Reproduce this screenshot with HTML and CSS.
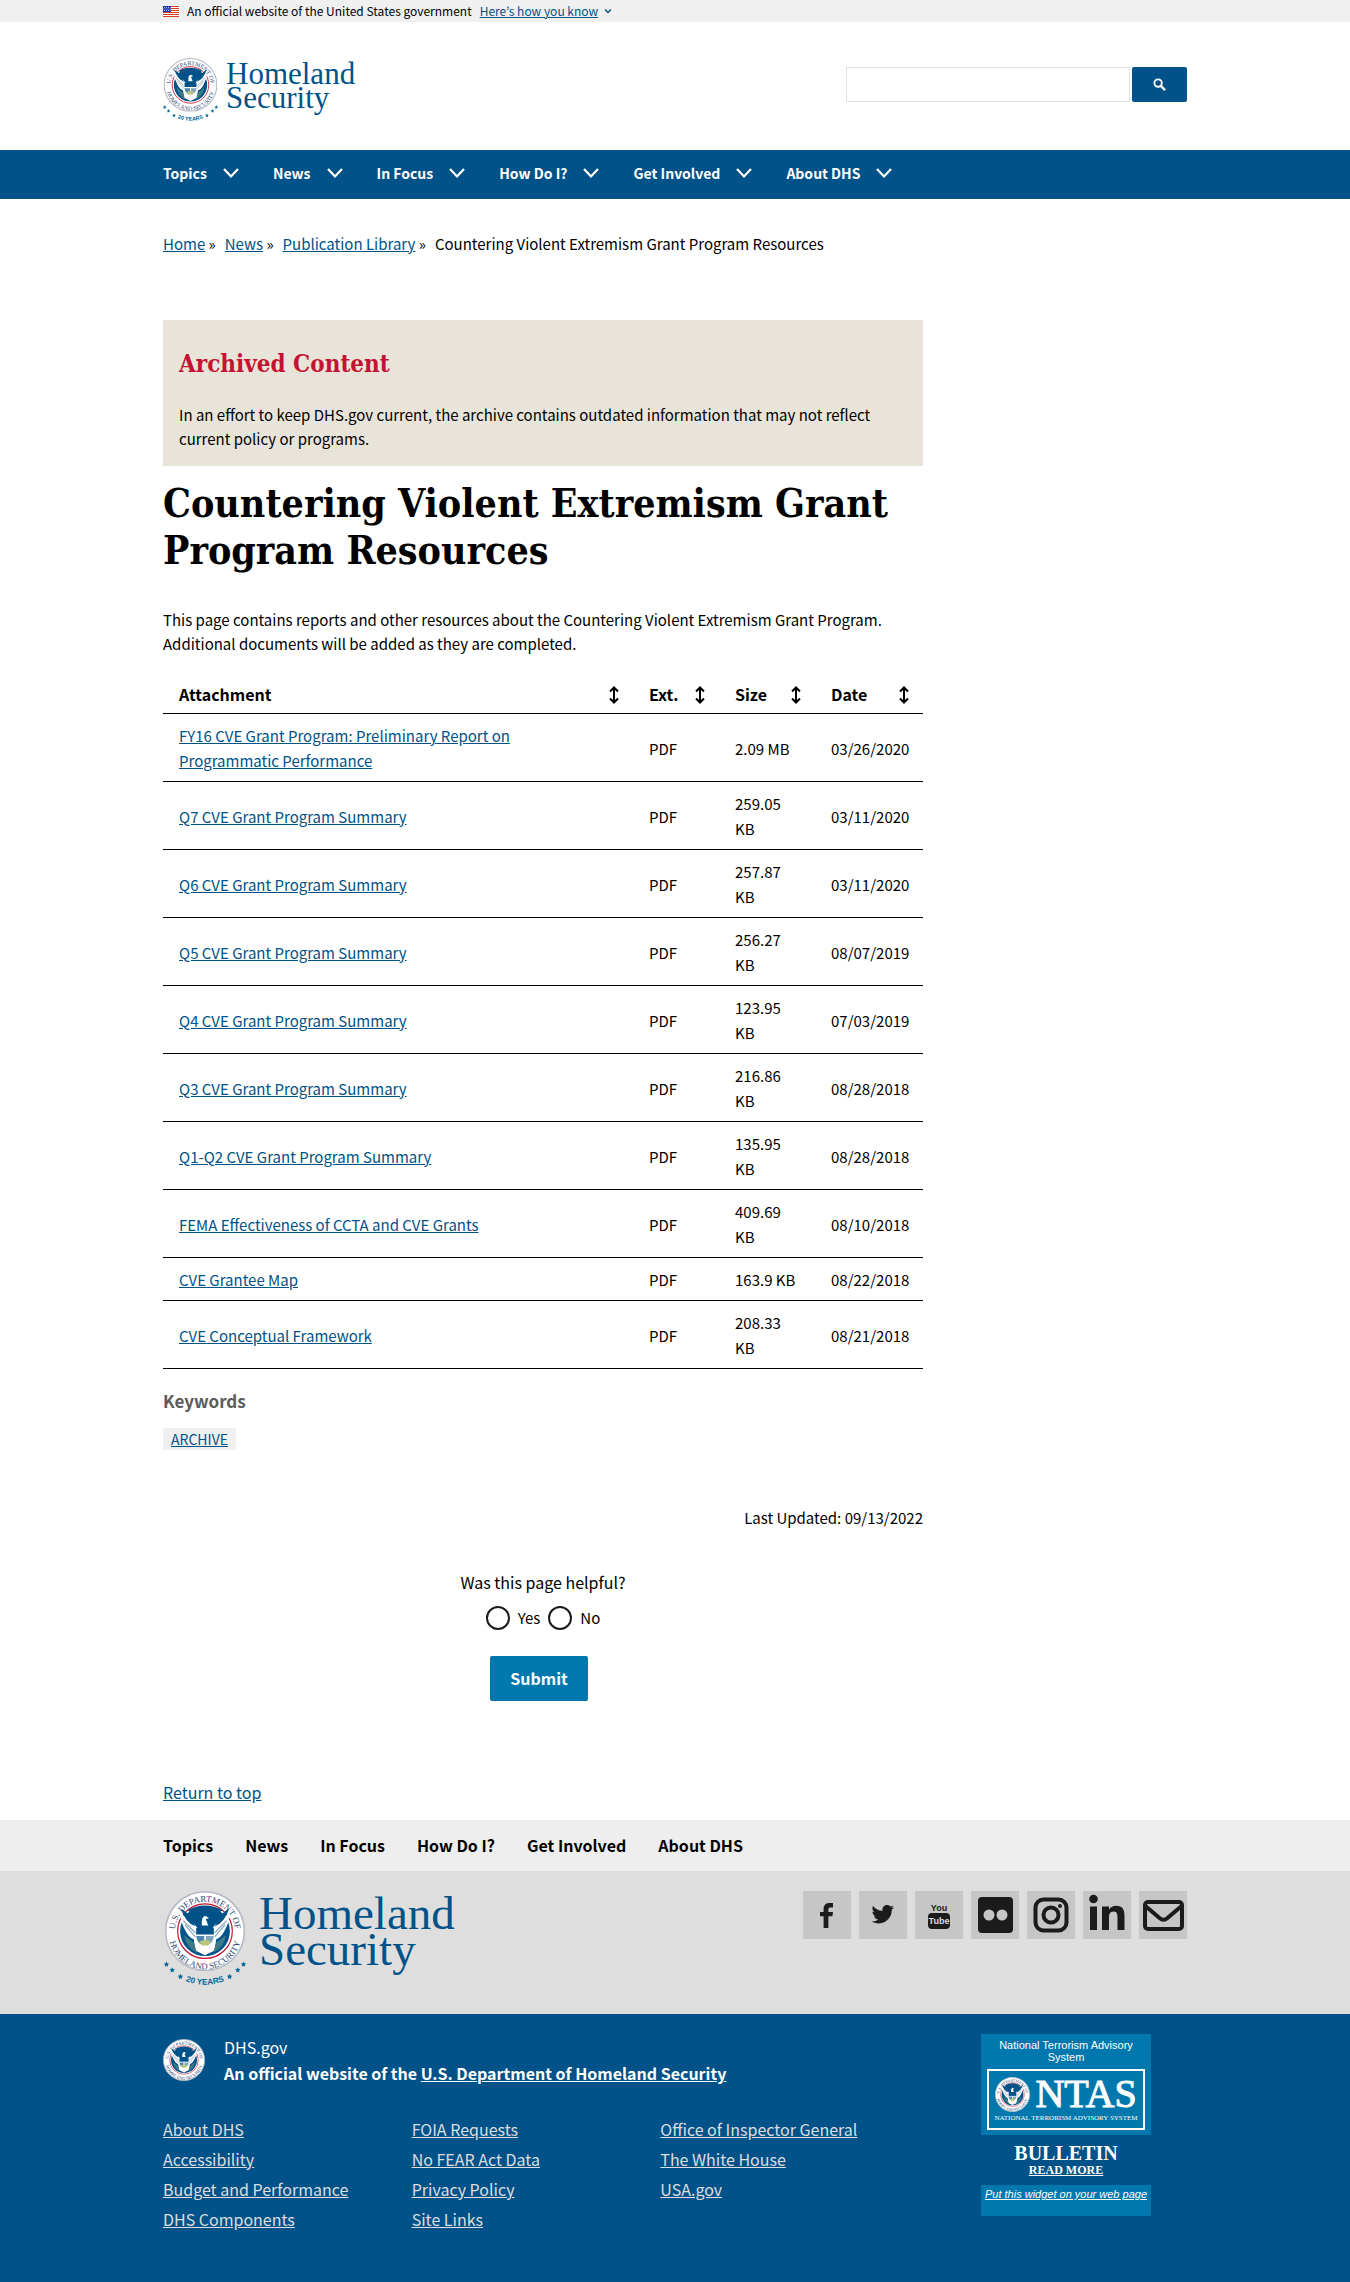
FILE: index.html
```html
<!DOCTYPE html>
<html lang="en">
<head>
<meta charset="utf-8">
<meta name="viewport" content="width=device-width, initial-scale=1">
<title>Countering Violent Extremism Grant Program Resources | Homeland Security</title>
<link rel="stylesheet" href="styles.css">
</head>
<body id="top">

<svg class="sprite" aria-hidden="true">
  <symbol id="seal" viewBox="0 0 100 100">
    <circle cx="50" cy="50" r="49" fill="#fff" stroke="#b5b9c4" stroke-width="2"/>
    <path id="arc-top" d="M14.500 63 A37.500 37.500 0 1 1 85.500 63" fill="none"/>
    <path id="arc-bottom" d="M4.500 52 A45.500 45.500 0 0 0 95.500 52" fill="none"/>
    <g class="seal-text">
      <text><textPath href="#arc-top" startOffset="50%" text-anchor="middle">U.S. DEPARTMENT OF</textPath></text>
      <text><textPath href="#arc-bottom" startOffset="50%" text-anchor="middle">HOMELAND SECURITY</textPath></text>
    </g>
    <circle cx="50" cy="50" r="34" fill="#fff" stroke="#c41230" stroke-width="1.500"/>
    <circle cx="50" cy="50" r="31" fill="#005288"/>
    <path d="M19 28 Q30 34 36 40 L42 48 L58 48 L64 40 Q70 34 81 28 Q80 40 74 50 Q70 58 64 60 L62 74 L50 80 L38 74 L36 60 Q30 58 26 50 Q20 40 19 28Z" fill="#fff"/>
    <path d="M23 37 L38 52 M25 42 L38 57 M77 37 L62 52 M75 42 L62 57" stroke="#8fa9c4" stroke-width="1.500" fill="none"/>
    <path d="M28 24 L33 27 L39 41 L44 43 L46 36 Q46 30 52 30 L56 34 L52 35 L55 43 L61 41 L67 27 L72 24 Q62 18 50 18 Q38 18 28 24Z" fill="#005288"/>
    <path d="M46 43 Q45 31 51 31 L55 34 L51 35 L54 43Z" fill="#fff"/>
    <path d="M39 46 H61 V54 H39Z" fill="#005288"/>
    <path d="M39 56 L49 56 L49 68 Q40 66 39 56Z" fill="#4f86ad"/>
    <path d="M51 56 H61 Q60 66 51 68Z" fill="#7fa5bf"/>
    <path d="M43 63 Q50 59 57 63 L54 68 H46Z" fill="#b9c77b"/>
    <path d="M20 22 Q28 26 33 34 L38 44 Q26 40 20 22Z M80 22 Q72 26 67 34 L62 44 Q74 40 80 22Z" fill="#005288"/>
    <path d="M24 55 Q26 70 40 77 L36 64Z M76 55 Q74 70 60 77 L64 64Z" fill="#3c7a86"/>
  </symbol>
  <symbol id="seal-years" viewBox="0 0 100 122">
    <use href="#seal" x="1" y="0" width="98" height="98"/>
    <path id="arc-years" d="M0 89 A62 62 0 0 0 100 89" fill="none"/>
    <text class="years-text"><textPath href="#arc-years" startOffset="50%" text-anchor="middle">20 YEARS</textPath></text>
    <g fill="#00689d">
      <path id="star" d="M3 86 l1 2.200 2.300 .3 -1.700 1.600 .4 2.300 -2 -1.100 -2 1.100 .4 -2.300 -1.700 -1.600 2.300 -.3z"/>
      <use href="#star" x="7" y="7"/>
      <use href="#star" x="17" y="15"/>
      <use href="#star" x="94"/>
      <use href="#star" x="87" y="7"/>
      <use href="#star" x="77" y="15"/>
    </g>
  </symbol>
  <symbol id="chevron" viewBox="0 0 16 16">
    <path d="M1 4 L8 11.500 L15 4" fill="none" stroke="currentColor" stroke-width="2.200"/>
  </symbol>
  <symbol id="sort" viewBox="0 0 10 18">
    <path d="M5 1.500 V16.500 M1 5.500 L5 1.500 L9 5.500 M1 12.500 L5 16.500 L9 12.500" fill="none" stroke="currentColor" stroke-width="2"/>
  </symbol>
</svg>

<section class="banner" aria-label="Official government website">
  <div class="container banner-row">
    <svg class="flag" viewBox="0 0 16 11" aria-hidden="true">
      <path fill="#fff" d="M0 0H16V11H0z"/>
      <path stroke="#db3e1f" stroke-width="1" d="M0 .5H16M0 2.500H16M0 4.500H16M0 6.500H16M0 8.500H16M0 10.500H16"/>
      <path fill="#1e33b1" d="M0 0H8V6H0z"/>
      <path stroke="#fff" stroke-width=".7" stroke-dasharray="1 1" d="M1 1.500H7.500M.5 3H7.500M1 4.500H7.500"/>
    </svg>
    <span>An official website of the United States government</span>
    <button class="banner-toggle" type="button"><span class="banner-link">Here’s how you know</span>
      <svg viewBox="0 0 16 16" aria-hidden="true"><path d="M2 5 L8 11 L14 5" fill="none" stroke="currentColor" stroke-width="3"/></svg>
    </button>
  </div>
</section>

<header>
  <div class="container masthead">
    <a class="logo" href="#top">
      <svg class="logo-seal" aria-hidden="true"><use href="#seal-years"/></svg>
      <span class="logo-name">Homeland<br>Security</span>
    </a>
    <form class="search" role="search">
      <input class="search-field" type="search" aria-label="Search">
      <button class="search-button" type="submit" aria-label="Search">
        <svg viewBox="0 0 14 14" aria-hidden="true"><circle cx="5.500" cy="5.500" r="4" fill="none" stroke="#fff" stroke-width="2"/><path d="M8.500 8.500 L13 13" stroke="#fff" stroke-width="2.500"/></svg>
      </button>
    </form>
  </div>
  <nav class="primary-nav" aria-label="Primary">
    <div class="container primary-list">
      <button type="button">Topics <svg aria-hidden="true"><use href="#chevron"/></svg></button>
      <button type="button">News <svg aria-hidden="true"><use href="#chevron"/></svg></button>
      <button type="button">In Focus <svg aria-hidden="true"><use href="#chevron"/></svg></button>
      <button type="button">How Do I? <svg aria-hidden="true"><use href="#chevron"/></svg></button>
      <button type="button">Get Involved <svg aria-hidden="true"><use href="#chevron"/></svg></button>
      <button type="button">About DHS <svg aria-hidden="true"><use href="#chevron"/></svg></button>
    </div>
  </nav>
</header>

<main class="container">
  <nav aria-label="Breadcrumb">
    <ol class="breadcrumb">
      <li><a href="#">Home</a> »</li>
      <li><a href="#">News</a> »</li>
      <li><a href="#">Publication Library</a> »</li>
      <li>Countering Violent Extremism Grant Program Resources</li>
    </ol>
  </nav>

  <div class="content">
    <section class="archived">
      <h2>Archived Content</h2>
      <p>In an effort to keep DHS.gov current, the archive contains outdated information that may not reflect current policy or programs.</p>
    </section>

    <h1>Countering Violent Extremism Grant Program Resources</h1>
    <p class="intro">This page contains reports and other resources about the Countering Violent Extremism Grant Program. Additional documents will be added as they are completed.</p>

    <table class="files">
      <colgroup><col><col class="col-ext"><col class="col-size"><col class="col-date"></colgroup>
      <thead>
        <tr>
          <th scope="col"><button type="button">Attachment <svg aria-hidden="true"><use href="#sort"/></svg></button></th>
          <th scope="col"><button type="button">Ext. <svg aria-hidden="true"><use href="#sort"/></svg></button></th>
          <th scope="col"><button type="button">Size <svg aria-hidden="true"><use href="#sort"/></svg></button></th>
          <th scope="col"><button type="button">Date <svg aria-hidden="true"><use href="#sort"/></svg></button></th>
        </tr>
      </thead>
      <tbody>
        <tr><td><a href="#">FY16 CVE Grant Program: Preliminary Report on<br>Programmatic Performance</a></td><td>PDF</td><td>2.09 MB</td><td>03/26/2020</td></tr>
        <tr><td><a href="#">Q7 CVE Grant Program Summary</a></td><td>PDF</td><td>259.05 KB</td><td>03/11/2020</td></tr>
        <tr><td><a href="#">Q6 CVE Grant Program Summary</a></td><td>PDF</td><td>257.87 KB</td><td>03/11/2020</td></tr>
        <tr><td><a href="#">Q5 CVE Grant Program Summary</a></td><td>PDF</td><td>256.27 KB</td><td>08/07/2019</td></tr>
        <tr><td><a href="#">Q4 CVE Grant Program Summary</a></td><td>PDF</td><td>123.95 KB</td><td>07/03/2019</td></tr>
        <tr><td><a href="#">Q3 CVE Grant Program Summary</a></td><td>PDF</td><td>216.86 KB</td><td>08/28/2018</td></tr>
        <tr><td><a href="#">Q1-Q2 CVE Grant Program Summary</a></td><td>PDF</td><td>135.95 KB</td><td>08/28/2018</td></tr>
        <tr><td><a href="#">FEMA Effectiveness of CCTA and CVE Grants</a></td><td>PDF</td><td>409.69 KB</td><td>08/10/2018</td></tr>
        <tr><td><a href="#">CVE Grantee Map</a></td><td>PDF</td><td>163.9 KB</td><td>08/22/2018</td></tr>
        <tr><td><a href="#">CVE Conceptual Framework</a></td><td>PDF</td><td>208.33 KB</td><td>08/21/2018</td></tr>
      </tbody>
    </table>

    <h3 class="keywords">Keywords</h3>
    <a class="tag" href="#">ARCHIVE</a>
    <p class="updated">Last Updated: 09/13/2022</p>

    <form class="feedback">
      <fieldset>
        <legend>Was this page helpful?</legend>
        <div class="choices">
          <input type="radio" name="helpful" id="helpful-yes"><label for="helpful-yes">Yes</label>
          <input type="radio" name="helpful" id="helpful-no"><label for="helpful-no">No</label>
        </div>
      </fieldset>
      <button class="submit" type="submit">Submit</button>
    </form>
  </div>
  <a class="return" href="#top">Return to top</a>
</main>

<footer>
  <nav class="footer-nav" aria-label="Footer">
    <div class="container footer-list">
      <a href="#">Topics</a><a href="#">News</a><a href="#">In Focus</a><a href="#">How Do I?</a><a href="#">Get Involved</a><a href="#">About DHS</a>
    </div>
  </nav>

  <div class="footer-brand">
    <div class="container brand-row">
      <a class="logo logo-large" href="#top">
        <svg class="logo-seal" aria-hidden="true"><use href="#seal-years"/></svg>
        <span class="logo-name">Homeland<br>Security</span>
      </a>
      <div class="social">
        <a href="#" aria-label="Facebook"><svg viewBox="0 0 48 48"><path d="M30 12v4.500h-2.600c-1.700 0-2 .8-2 2V21H30l-.6 4.300h-4V37h-4.800V25.300H17V21h3.600v-3c0-3.900 2.400-6 5.800-6 1.700 0 3 0 3.600 0z"/></svg></a>
        <a href="#" aria-label="Twitter"><svg viewBox="0 0 48 48"><path transform="translate(12.500 12) scale(.94)" d="M23.954 4.569c-.885.389-1.830.654-2.825.775 1.014-.611 1.794-1.574 2.163-2.723-.951.555-2.005.959-3.127 1.184-.896-.959-2.173-1.559-3.591-1.559-2.717 0-4.920 2.203-4.920 4.917 0 .39.045.765.127 1.124C7.691 8.094 4.066 6.130 1.640 3.161c-.427.722-.666 1.561-.666 2.475 0 1.710.87 3.213 2.188 4.096-.807-.026-1.566-.248-2.228-.616v.061c0 2.385 1.693 4.374 3.946 4.827-.413.111-.849.171-1.296.171-.314 0-.615-.03-.916-.086.631 1.953 2.445 3.377 4.604 3.417-1.680 1.319-3.809 2.105-6.102 2.105-.39 0-.779-.023-1.170-.067 2.189 1.394 4.768 2.209 7.557 2.209 9.054 0 13.999-7.496 13.999-13.986 0-.209 0-.42-.015-.63.961-.689 1.800-1.560 2.460-2.548z"/></svg></a>
        <a href="#" aria-label="YouTube"><svg viewBox="0 0 48 48"><rect x="13" y="22" width="22" height="16" rx="4"/><text class="yt" x="24" y="20" text-anchor="middle">You</text><text class="yt yt-light" x="24" y="33" text-anchor="middle">Tube</text></svg></a>
        <a href="#" aria-label="Flickr"><svg viewBox="0 0 48 48"><rect x="7" y="6" width="35" height="36" rx="4"/><circle class="hole" cx="18" cy="24" r="5.500"/><circle class="hole" cx="31" cy="24" r="5.500"/></svg></a>
        <a href="#" aria-label="Instagram"><svg class="outline" viewBox="0 0 48 48"><rect x="8.500" y="8.500" width="31" height="31" rx="8"/><circle cx="24" cy="24" r="7.500"/><circle class="dot" cx="33" cy="15" r="2"/></svg></a>
        <a href="#" aria-label="LinkedIn"><svg viewBox="0 0 48 48"><circle cx="10.500" cy="8" r="4.300"/><path d="M7 15.500h7V39H7z M19 15.500h7v3.200c1.200-2.200 3.700-3.900 7-3.900 6.800 0 8.500 4 8.500 10.400V39h-7V26.600c0-3-.3-6-3.900-6-3.700 0-4.600 2.800-4.600 5.800V39h-7z"/></svg></a>
        <a href="#" aria-label="Email"><svg class="outline" viewBox="0 0 48 48"><rect x="6" y="11" width="37" height="27" rx="3"/><path d="M7 15.500 L20.500 27 Q24.500 30.500 28.500 27 L42 15.500"/></svg></a>
      </div>
    </div>
  </div>

  <div class="footer-info">
    <div class="container info-row">
      <div class="info-main">
        <div class="identifier">
          <svg class="identifier-seal" aria-hidden="true"><use href="#seal"/></svg>
          <p>DHS.gov<br><strong>An official website of the <a href="#">U.S. Department of Homeland Security</a></strong></p>
        </div>
        <div class="links">
          <ul>
            <li><a href="#">About DHS</a></li>
            <li><a href="#">Accessibility</a></li>
            <li><a href="#">Budget and Performance</a></li>
            <li><a href="#">DHS Components</a></li>
          </ul>
          <ul>
            <li><a href="#">FOIA Requests</a></li>
            <li><a href="#">No FEAR Act Data</a></li>
            <li><a href="#">Privacy Policy</a></li>
            <li><a href="#">Site Links</a></li>
          </ul>
          <ul>
            <li><a href="#">Office of Inspector General</a></li>
            <li><a href="#">The White House</a></li>
            <li><a href="#">USA.gov</a></li>
          </ul>
        </div>
      </div>
      <aside class="ntas">
        <div class="ntas-top">
          <p>National Terrorism Advisory System</p>
          <div class="ntas-frame">
            <div class="ntas-mark">
              <svg aria-hidden="true"><use href="#seal"/></svg>
              <span>NTAS</span>
            </div>
            <div class="ntas-caption">NATIONAL TERRORISM ADVISORY SYSTEM</div>
          </div>
        </div>
        <div class="bulletin">
          <strong>BULLETIN</strong>
          <a href="#">READ MORE</a>
        </div>
        <div class="ntas-bottom"><a href="#">Put this widget on your web page</a></div>
      </aside>
    </div>
  </div>
</footer>
</body>
</html>
```
FILE: styles.css
```css
:root {
  --blue: #005288;
  --bright: #0078ae;
  --sans: "Noto Sans CJK KR", "Open Sans", sans-serif;
  --serif: "DejaVu Serif Condensed", "DejaVu Serif", serif;
  --logo: "Liberation Serif", serif;
}

* {
  box-sizing: border-box;
}

body {
  margin: 0;
  background: #fff;
  color: #000;
  font-family: var(--sans);
  font-size: 15px;
  line-height: 24px;
}

a {
  color: var(--blue);
}

p,
h1,
h2,
h3,
ul,
ol,
fieldset {
  margin: 0;
  padding: 0;
}

button {
  padding: 0;
  border: 0;
  background: none;
  color: inherit;
  font: inherit;
  cursor: pointer;
}

.sprite {
  position: absolute;
  width: 0;
  height: 0;
}

.container {
  width: 100%;
  max-width: 1056px;
  margin: 0 auto;
  padding: 0 16px;
}

/* Government banner */

.banner {
  background: #f0f0f0;
  font-size: 12px;
  line-height: 22px;
}

.banner-row {
  display: flex;
  align-items: center;
  gap: 8px;
}

.flag {
  width: 16px;
  height: 11px;
}

.banner-toggle {
  display: flex;
  align-items: center;
  gap: 6px;
  color: var(--blue);
}

.banner-toggle svg {
  width: 8px;
  height: 8px;
}

.banner-link {
  text-decoration: underline;
}

/* Masthead */

.masthead {
  display: flex;
  align-items: center;
  justify-content: space-between;
  padding-top: 36px;
  padding-bottom: 25px;
}

.logo {
  display: flex;
  gap: 8px;
  color: var(--blue);
  font-family: var(--logo);
  font-size: 31px;
  line-height: 24px;
  text-decoration: none;
}

.logo-seal {
  width: 55px;
  height: 67px;
}

.logo-name {
  padding-top: 4px;
}

.seal-text {
  fill: #2c4a76;
  font-family: var(--logo);
  font-size: 11px;
}

.years-text {
  fill: #00689d;
  font-family: "Liberation Sans", sans-serif;
  font-size: 10px;
  font-weight: bold;
}

.search {
  display: flex;
  gap: 2px;
  width: 341px;
  margin-bottom: 15px;
}

.search-field {
  flex: 1;
  min-width: 0;
  height: 35px;
  border: 1px solid #dfe1e5;
  background: #fff;
}

.search-button {
  display: flex;
  align-items: center;
  justify-content: center;
  width: 55px;
  border-radius: 2px;
  background: var(--blue);
}

.search-button svg {
  width: 13px;
  height: 13px;
}

/* Primary navigation */

.primary-nav {
  background: var(--blue);
  color: #fff;
}

.primary-list {
  display: flex;
  flex-wrap: wrap;
  gap: 0 34px;
}

.primary-list button {
  display: flex;
  align-items: center;
  gap: 16px;
  height: 49px;
  padding-bottom: 4px;
  font-size: 14px;
  font-weight: bold;
}

.primary-list svg {
  width: 16px;
  height: 16px;
}

/* Page body */

.breadcrumb {
  display: flex;
  flex-wrap: wrap;
  gap: 0 9px;
  padding: 33px 0 64px;
  list-style: none;
}

.content {
  max-width: 760px;
}

.archived {
  padding: 28px 16px 15px;
  background: #e9e4d9;
}

.archived h2 {
  margin-bottom: 23px;
  color: #c41230;
  font-family: var(--serif);
  font-size: 24px;
  line-height: 32px;
}

h1 {
  margin: 14px 0 34px;
  font-family: var(--serif);
  font-size: 39px;
  line-height: 47px;
}

.files {
  width: 100%;
  margin-top: 18px;
  border-collapse: collapse;
  table-layout: fixed;
  line-height: 25px;
}

.col-ext {
  width: 86px;
}

.col-size {
  width: 96px;
}

.col-date {
  width: 108px;
}

.files th,
.files td {
  padding: 9px 16px 8px;
  border-bottom: 1px solid #000;
  text-align: left;
}

.files th {
  padding: 8px 14px 6px 16px;
}

.files td:last-child {
  padding-right: 8px;
}

.files th button {
  display: flex;
  align-items: center;
  justify-content: space-between;
  width: 100%;
  font-size: 16px;
  font-weight: bold;
}

.files th svg {
  width: 10px;
  height: 18px;
}

.keywords {
  margin: 20px 0 14px;
  color: #5a5b5d;
  font-size: 17px;
  line-height: 24px;
}

.tag {
  display: inline-block;
  padding: 0 8px;
  background: #f0f0f0;
  font-size: 14px;
  line-height: 22px;
}

.updated {
  margin-top: 55px;
  text-align: right;
}

.feedback {
  display: flex;
  flex-direction: column;
  align-items: center;
  margin-top: 40px;
  font-size: 16px;
}

.feedback fieldset {
  border: 0;
  text-align: center;
}

.choices {
  display: flex;
  align-items: center;
  justify-content: center;
  gap: 8px;
  margin-top: 12px;
  font-size: 15px;
}

.choices input {
  appearance: none;
  width: 24px;
  height: 24px;
  margin: 0;
  border: 2px solid #1b1b1b;
  border-radius: 50%;
  background: #fff;
}

.submit {
  margin: 26px 8px 0 0;
  padding: 10px 20px 11px;
  border-radius: 2px;
  background: var(--bright);
  color: #fff;
  font-weight: bold;
}

.return {
  display: inline-block;
  margin: 79px 0 16px;
  font-size: 16px;
}

/* Footer */

.footer-nav {
  background: #eee;
}

.footer-list {
  display: flex;
  flex-wrap: wrap;
  gap: 0 32px;
  font-size: 16px;
  font-weight: bold;
  line-height: 51px;
}

.footer-list a {
  color: #000;
  text-decoration: none;
}

.footer-brand {
  background: #dedede;
}

.brand-row {
  display: flex;
  flex-wrap: wrap;
  align-items: flex-start;
  justify-content: space-between;
  padding-top: 20px;
  padding-bottom: 23px;
}

.logo-large {
  gap: 12px;
  font-size: 47px;
  line-height: 36px;
}

.logo-large .logo-seal {
  width: 84px;
  height: 100px;
}

.social {
  display: flex;
  flex-wrap: wrap;
  gap: 8px;
}

.social a {
  width: 48px;
  height: 48px;
  background: #c6c6c6;
}

.social svg {
  display: block;
  fill: #1b1b1b;
}

.social .outline {
  fill: none;
  stroke: #1b1b1b;
  stroke-width: 4;
}

.social .dot {
  fill: #1b1b1b;
  stroke: none;
}

.social .hole {
  fill: #c6c6c6;
}

.yt {
  font-family: "Liberation Sans", sans-serif;
  font-size: 9px;
  font-weight: bold;
}

.social .yt-light {
  fill: #dedede;
}

.footer-info {
  background: var(--blue);
  color: #fff;
  font-size: 16px;
}

.footer-info a {
  color: inherit;
}

.info-row {
  display: flex;
  flex-wrap: wrap;
  justify-content: space-between;
  gap: 20px;
  padding-top: 20px;
  padding-bottom: 50px;
}

.info-main {
  flex: 1;
  max-width: 746px;
}

.identifier {
  display: flex;
  align-items: center;
  gap: 19px;
  line-height: 26px;
}

.identifier-seal {
  width: 42px;
  height: 42px;
}

.links {
  display: grid;
  grid-template-columns: repeat(3, 1fr);
  margin-top: 28px;
  color: #dcdee0;
  line-height: 30px;
}

.links ul {
  list-style: none;
}

.ntas {
  width: 170px;
  margin-right: 36px;
  font-family: "Liberation Sans", Arial, sans-serif;
  font-size: 11px;
  line-height: 12px;
  text-align: center;
}

.ntas-top {
  padding: 5px 6px;
  background: var(--bright);
}

.ntas-frame {
  margin-top: 6px;
  padding: 5px 0 4px;
  border: 2px solid #fff;
  font-family: var(--logo);
}

.ntas-mark {
  display: flex;
  align-items: center;
  justify-content: center;
  gap: 5px;
  font-size: 40px;
  line-height: 36px;
  -webkit-text-stroke: 1px #fff;
}

.ntas-mark svg {
  width: 35px;
  height: 35px;
  -webkit-text-stroke: 0;
}

.ntas-caption {
  font-size: 7px;
  white-space: nowrap;
}

.bulletin {
  display: flex;
  flex-direction: column;
  align-items: center;
  padding: 8px 0;
  font-family: var(--logo);
  font-size: 12px;
  line-height: 14px;
}

.bulletin a {
  font-weight: bold;
}

.bulletin strong {
  font-size: 20px;
  line-height: 20px;
}

.ntas-bottom {
  padding: 3px 0 16px;
  background: var(--bright);
  font-style: italic;
  white-space: nowrap;
}
```
